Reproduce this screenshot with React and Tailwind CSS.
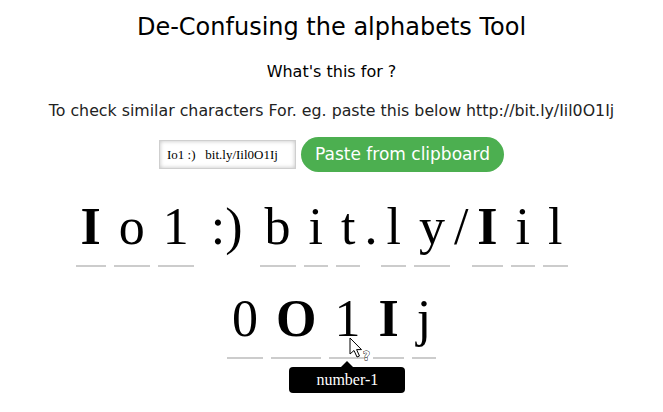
import React from 'react'

const sans = { fontFamily: '"DejaVu Sans", sans-serif' }

const rowOne = 'Io1 :) bit.ly/Iil'
const rowTwo = '0O1Ij'

const isConfusable = (ch) => /[A-Za-z0-9]/.test(ch)

const Glyph = ({ ch, children }) => (
    <span
        className={`relative inline-block px-[5px] mx-[4px] pb-[8px] border-b-2 border-[#cccccc] leading-[60px] ${
            /[A-Z]/.test(ch) ? 'font-bold' : 'font-normal'
        }`}
    >
        {ch}
        {children}
    </span>
)

const Tooltip = () => (
    <>
        {/* help cursor */}
        <svg
            className="absolute left-[20px] top-[48px] z-20"
            width="24"
            height="26"
            viewBox="0 0 24 26"
        >
            <path
                d="M1 1 L1 17 L5 13.5 L8 20 L10.5 19 L7.6 12.6 L12.5 12.6 Z"
                fill="#fff"
                stroke="#000"
                strokeWidth="1"
                strokeLinejoin="round"
            />
            <text x="14" y="23" fontSize="12" fontFamily="DejaVu Sans" fontWeight="bold" fill="#fff" stroke="#000" strokeWidth="0.8" paintOrder="stroke">
                ?
            </text>
        </svg>
        <div className="absolute left-1/2 top-full mt-[4px] -translate-x-1/2 z-10">
            <div className="mx-auto w-0 h-0 border-x-[6px] border-x-transparent border-b-[6px] border-b-black" />
            <div
                className="bg-black text-white rounded-[4px] w-[116px] h-[26px] flex items-center justify-center text-[16px] leading-none font-normal"
                style={{ fontFamily: '"Liberation Serif", serif' }}
            >
                number-1
            </div>
        </div>
    </>
)

const Row = ({ text, tipAt, className }) => (
    <div className={`text-center whitespace-nowrap leading-[60px] ${className}`}>
        {text.split('').map((ch, i) =>
            isConfusable(ch) ? (
                <Glyph key={i} ch={ch}>
                    {i === tipAt && <Tooltip />}
                </Glyph>
            ) : (
                <React.Fragment key={i}>{ch}</React.Fragment>
            )
        )}
    </div>
)

export default function App() {
    return (
        <div className="w-[663px] h-[412px] bg-white overflow-hidden text-center">
            <h1 className="pt-[12px] text-[24px] leading-[30px] text-black font-normal" style={sans}>
                De-Confusing the alphabets Tool
            </h1>
            <h3 className="mt-[20px] text-[16px] leading-[20px] text-black font-medium" style={sans}>
                What's this for ?
            </h3>
            <p className="mt-[18px] text-[15.8px] leading-[22px] text-[#222]" style={sans}>
                To check similar characters For. eg. paste this below http://bit.ly/Iil0O1Ij
            </p>

            <div className="mt-[15px] flex items-center justify-center gap-[5px]">
                <div
                    className="w-[137px] h-[29px] border border-[#cfcfcf] bg-white shadow-[inset_0_0_4px_rgba(0,0,0,0.25)] flex items-center px-[7px] text-[13px] text-black whitespace-pre"
                    style={{ fontFamily: '"Liberation Serif", serif' }}
                >
                    {'Io1 :)   bit.ly/Iil0O1Ij'}
                </div>
                <button
                    className="h-[35px] px-[14px] rounded-full bg-[#4caf50] text-white text-[17px]"
                    style={sans}
                >
                    Paste from clipboard
                </button>
            </div>

            <div className="mt-[25px] text-[52px] text-black" style={{ fontFamily: '"Liberation Serif", serif' }}>
                <Row text={rowOne} className="pr-[20px]" />
                <Row text={rowTwo} tipAt={2} className="mt-[22px]" />
            </div>
        </div>
    )
}
